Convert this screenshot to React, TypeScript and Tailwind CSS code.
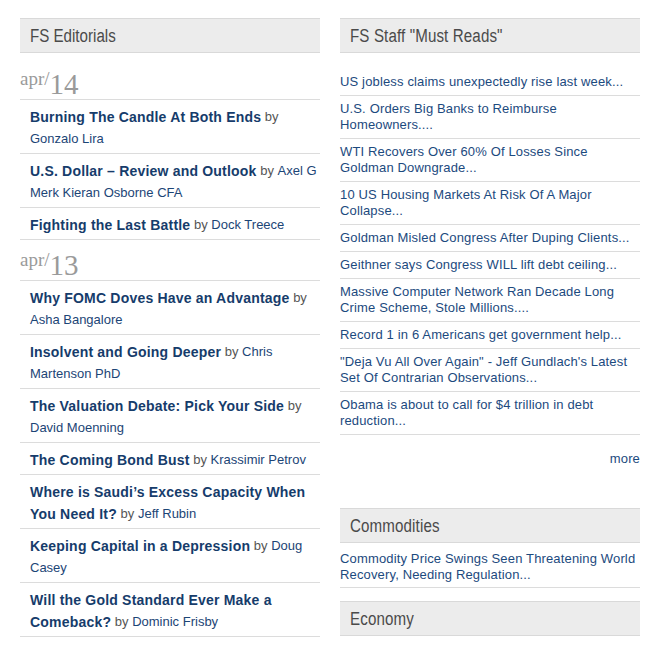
const editorials = [
  {
    date: ["apr", "14"],
    items: [
      { title: "Burning The Candle At Both Ends", author: "Gonzalo Lira" },
      { title: "U.S. Dollar – Review and Outlook", author: "Axel G Merk Kieran Osborne CFA" },
      { title: "Fighting the Last Battle", author: "Dock Treece" },
    ],
  },
  {
    date: ["apr", "13"],
    items: [
      { title: "Why FOMC Doves Have an Advantage", author: "Asha Bangalore" },
      { title: "Insolvent and Going Deeper", author: "Chris Martenson PhD" },
      { title: "The Valuation Debate: Pick Your Side", author: "David Moenning" },
      { title: "The Coming Bond Bust", author: "Krassimir Petrov" },
      { title: "Where is Saudi’s Excess Capacity When You Need It?", author: "Jeff Rubin" },
      { title: "Keeping Capital in a Depression", author: "Doug Casey" },
      { title: "Will the Gold Standard Ever Make a Comeback?", author: "Dominic Frisby" },
      { title: "Stagflation Is Already Here", author: "John Mauldin" },
    ],
  },
];

const mustReads = [
  "US jobless claims unexpectedly rise last week...",
  "U.S. Orders Big Banks to Reimburse Homeowners....",
  "WTI Recovers Over 60% Of Losses Since Goldman Downgrade...",
  "10 US Housing Markets At Risk Of A Major Collapse...",
  "Goldman Misled Congress After Duping Clients...",
  "Geithner says Congress WILL lift debt ceiling...",
  "Massive Computer Network Ran Decade Long Crime Scheme, Stole Millions....",
  "Record 1 in 6 Americans get government help...",
  "\"Deja Vu All Over Again\" - Jeff Gundlach's Latest Set Of Contrarian Observations...",
  "Obama is about to call for $4 trillion in debt reduction...",
];

function SectionHeader({ label }: { label: string }) {
  return (
    <div className="h-[35px] border-y border-[#d9d9d9] bg-[#ececec] pl-[10px] flex items-center">
      <span className="text-[18px] text-[#4a4a4a] leading-none scale-x-[0.84] origin-left whitespace-nowrap">
        {label}
      </span>
    </div>
  );
}

export default function App() {
  return (
    <div className="bg-white min-h-[648px] px-[20px] pt-[18px] flex gap-[20px] font-['Liberation_Sans',Arial,sans-serif] text-[13px]">
      {/* Left: editorials */}
      <div className="w-[300px]">
        <SectionHeader label="FS Editorials" />
        {editorials.map((day, i) => (
          <div key={day.date[1]}>
            <div className={`${i === 0 ? "mt-[6px]" : ""} h-[41px] border-b border-[#dcdcdc] flex items-end text-[#9a9a9a] font-['Liberation_Serif',serif]`}>
              <span className="text-[19px] leading-none mb-[11px]">{day.date[0]}/</span>
              <span className="text-[29px] leading-none">{day.date[1]}</span>
            </div>
            {day.items.map((it) => (
              <div key={it.title} className="border-b border-[#dcdcdc] pl-[10px] pt-[6px] pb-[3px] leading-[22px] text-[#1c4576]">
                <span className="align-top font-bold text-[14px] text-[#163c6b] tracking-[0.2px]">{it.title}</span>{" "}
                <span className="align-top text-[#555]">by</span>{" "}
                <span className="align-top">{it.author}</span>
              </div>
            ))}
          </div>
        ))}
      </div>

      {/* Right: must reads + categories */}
      <div className="w-[300px] tracking-[0.15px]">
        <SectionHeader label={'FS Staff "Must Reads"'} />
        <div className="mt-[16px]">
          {mustReads.map((t) => (
            <div key={t} className="border-b border-[#dcdcdc] py-[5px] leading-[16px] text-[#1c4a7e]">
              {t}
            </div>
          ))}
        </div>
        <div className="mt-[16px] text-right leading-[16px] text-[#1c4a7e]">more</div>

        <div className="mt-[41px]">
          <SectionHeader label="Commodities" />
          <div className="border-b border-[#dcdcdc] pt-[8px] pb-[4px] leading-[16px] text-[#1c4a7e]">
            Commodity Price Swings Seen Threatening World Recovery, Needing Regulation...
          </div>
        </div>

        <div className="mt-[13px]">
          <SectionHeader label="Economy" />
        </div>
      </div>
    </div>
  );
}
